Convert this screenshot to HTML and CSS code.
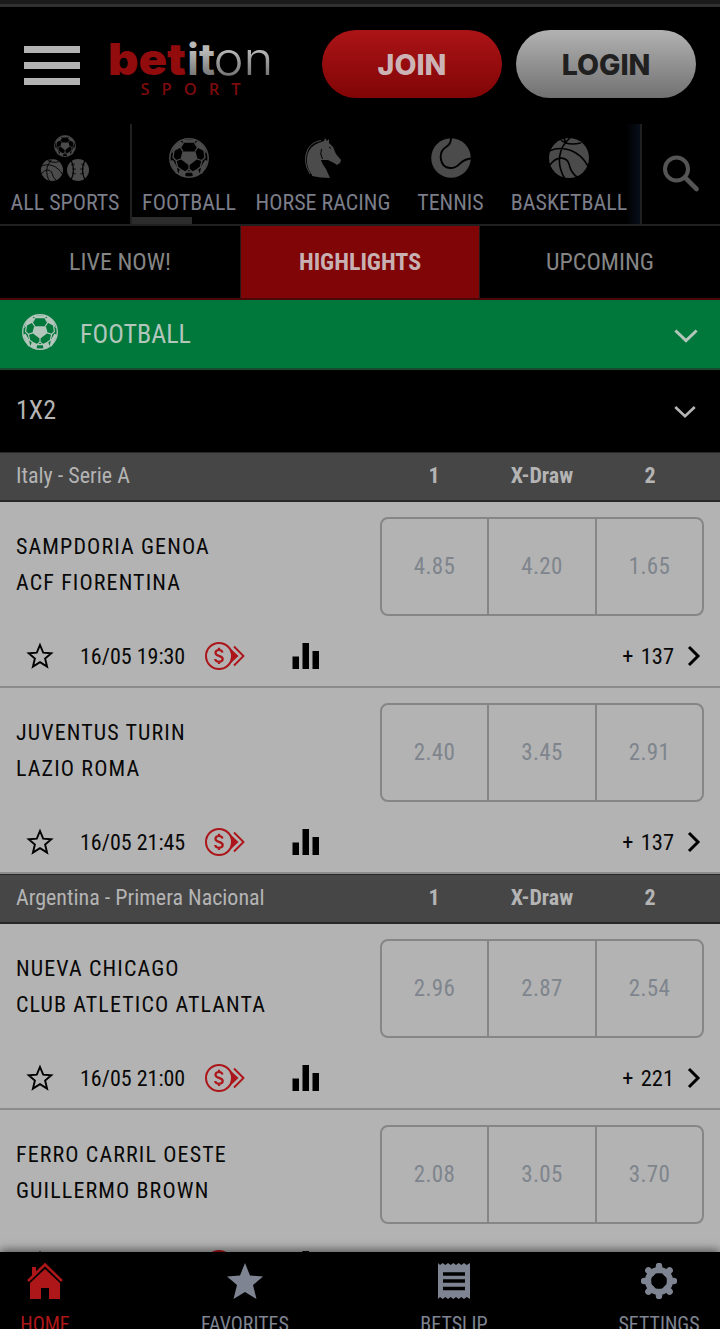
FILE: index.html
```html
<!DOCTYPE html>
<html lang="en">
<head>
<meta charset="utf-8">
<title>Betiton Sport</title>
<link rel="stylesheet" href="styles.css">
</head>
<body>
<svg class="defs" aria-hidden="true">
  <defs>
    <linearGradient id="silver" x1="0" y1="0" x2="0" y2="1"><stop offset=".35" stop-color="#b8b8b8"/><stop offset=".85" stop-color="#707070"/></linearGradient>
    <symbol id="ball" viewBox="0 0 40 40">
      <circle cx="20" cy="20" r="19.2" fill="none" stroke="currentColor" stroke-width="1.5"/>
      <g fill="currentColor">
        <path d="M13.5 13.5h13l2 7.5-8.500 6.500-8.500-6.500z"/>
        <path d="M13 1.700h14l-1 3-12 0zM5 8l6-5 3 2-3 5-6 3-3 3zM35 8l-6-5-3 2 3 5 6 3 3 3zM1 23l3-1 4 7 1 6-2 1zM39 23l-3-1-4 7-1 6 2 1zM11 31l6 3-1 5-7-3zM29 31l-6 3 1 5 7-3z"/>
      </g>
      <g fill="none" stroke="currentColor" stroke-width="1.300">
        <path d="M14 13.500l-2.500-4 3-4.500M26 13.500l2.500-4-3-4.500M12 21l-5 1.500-3-3 1-7M28 21l5 1.500 3-3-1-7M20 27v4l-3.500 3h7l-3.500-3M7 22.500l1.500 6.500 4 3 4 2M33 22.500l-1.500 6.500-4 3-4 2"/>
      </g>
    </symbol>
    <symbol id="basket" viewBox="0 0 40 40">
      <circle cx="20" cy="20" r="20" fill="currentColor"/>
      <path d="M21 0C9 10 7 26 16 41M0 13C14 7 30 12 39 28M1 27C8 17 18 19 20 26q2 9 8 13M12 2q6 6 20 3M15 0q1 4 3 5" fill="none" stroke="#000" stroke-width="1.600"/>
    </symbol>
    <symbol id="star" viewBox="0 0 28 28"><path d="M14 3l3.200 7.600 8.100.600-6.200 5.300 2 8.100-7.100-4.400-7.100 4.400 2-8.100L2.700 11.200l8.100-.600z" fill="none" stroke="#000" stroke-width="1.900"/></symbol>
    <symbol id="cash" viewBox="0 0 42 30">
      <circle cx="15" cy="15" r="13" fill="none" stroke="#ac1519" stroke-width="2"/>
      <path d="M26 7l8.500 8-8.500 8q3-8 0-16z" fill="#ac1519"/>
      <path d="M30 5.500l9.500 9.500-9.500 9.500" fill="none" stroke="#ac1519" stroke-width="1.900"/>
      <path d="M18.500 11.500q-.500-2.500-3.500-2.500-3.500 0-3.500 2.800 0 2.200 3.500 3.100 3.700 1 3.700 3.200 0 2.700-3.700 2.700-3.500 0-3.800-2.800M15 6.800v2.500m0 11v2.700" fill="none" stroke="#ac1519" stroke-width="2.200"/>
    </symbol>
    <symbol id="bars" viewBox="0 0 28 28"><path d="M.500 14.500H7V27H.500zM10.500 1H17v26h-6.500zM20.500 9H27v18h-6.500z"/></symbol>
    <symbol id="right" viewBox="0 0 14 22"><path d="M2 2l9 9-9 9" fill="none" stroke="#000" stroke-width="3"/></symbol>
    <symbol id="down" viewBox="0 0 26 16"><path d="M1.500 2L13 13 24.500 2" fill="none" stroke="currentColor" stroke-width="3.200"/></symbol>
  </defs>
</svg>
<div class="app">
  <div class="status"></div>
  <header class="head">
    <div class="burger"><i></i><i></i><i></i></div>
    <svg class="logo" viewBox="0 0 170 66" width="170" height="66">
      <text class="bet" x="3" y="41" textLength="78" lengthAdjust="spacingAndGlyphs">bet</text>
      <text class="it" x="82" y="41" textLength="28" lengthAdjust="spacingAndGlyphs">it</text>
      <text class="on" x="108.500" y="41" textLength="60" lengthAdjust="spacingAndGlyphs">on</text>
      <text class="sport" x="35.500" y="61" textLength="100">SPORT</text>
    </svg>
    <div class="btn join">JOIN</div>
    <div class="btn login">LOGIN</div>
  </header>
  <nav class="sports">
    <div class="sport-item all">
      <div class="trio"><svg class="s22"><use href="#ball"/></svg><div><svg class="s22"><use href="#basket"/></svg><svg class="s22" viewBox="0 0 22 22"><circle cx="11" cy="11" r="11" fill="currentColor"/><path d="M4 1q5 10 0 20M18 1q-5 10 0 20" fill="none" stroke="#000" stroke-width="1.200"/><path d="M4 6l4-1M5 10h4M5 14l4 1M18 6l-4-1M17 10h-4M17 14l-4 1" stroke="#000" stroke-width=".700"/></svg></div></div>
      <span>ALL SPORTS</span>
    </div>
    <div class="sport-item foot"><svg class="s40"><use href="#ball"/></svg><span>FOOTBALL</span><b class="under"></b></div>
    <div class="sport-item horse"><svg class="s40" viewBox="0 0 40 40"><path d="M9 37Q3 29 4 20 5 8 18 4l3-1 1-3 2 3 2-2v4l4 4 3 7 5 6-1 3-3 2-3-2-6-3-7 0q1 4 5 9l4 9q-10 0-18-2z" fill="currentColor"/><path d="M7 36Q-1 23 5 11 9 4 18 2.500" fill="none" stroke="currentColor" stroke-width="1"/><path d="M18.500 11q-2 5 1 10" fill="none" stroke="#000"/><path d="M26 9l2 1.500" stroke="#000"/></svg><span>HORSE RACING</span></div>
    <div class="sport-item tennis"><svg class="s40" viewBox="0 0 40 40"><circle cx="20" cy="20" r="19.800" fill="currentColor"/><path d="M20 0q0 6-5 9C7 14 8 29 19 30 29 31 28 21 40 20.500" fill="none" stroke="#000" stroke-width="1.900"/></svg><span>TENNIS</span></div>
    <div class="sport-item hoops"><svg class="s40"><use href="#basket"/></svg><span>BASKETBALL</span></div>
    <div class="search"><svg width="38" height="38" viewBox="0 0 38 38"><circle cx="14.500" cy="14" r="11.500" fill="none" stroke="currentColor" stroke-width="4"/><path d="M23 22.500L34.500 34" stroke="currentColor" stroke-width="4.600" stroke-linecap="round"/></svg></div>
  </nav>
  <nav class="tabs"><div class="tab"><span>LIVE NOW!</span></div><div class="tab on-tab"><span>HIGHLIGHTS</span></div><div class="tab"><span>UPCOMING</span></div></nav>
  <div class="group"><svg class="s36"><use href="#ball"/></svg><span>FOOTBALL</span><svg class="chev"><use href="#down"/></svg></div>
  <div class="market"><span>1X2</span><svg class="chev small"><use href="#down"/></svg></div>

  <div class="league"><span>Italy - Serie A</span><b>1</b><b>X-Draw</b><b>2</b></div>
  <article class="match">
    <div class="top"><div class="teams"><span>SAMPDORIA GENOA</span><span>ACF FIORENTINA</span></div><div class="odds"><span>4.85</span><span>4.20</span><span>1.65</span></div></div>
    <div class="meta"><svg class="star"><use href="#star"/></svg><span class="date">16/05 19:30</span><svg class="cash"><use href="#cash"/></svg><svg class="bars"><use href="#bars"/></svg><span class="more">+ 137</span><svg class="right"><use href="#right"/></svg></div>
  </article>
  <article class="match">
    <div class="top"><div class="teams"><span>JUVENTUS TURIN</span><span>LAZIO ROMA</span></div><div class="odds"><span>2.40</span><span>3.45</span><span>2.91</span></div></div>
    <div class="meta"><svg class="star"><use href="#star"/></svg><span class="date">16/05 21:45</span><svg class="cash"><use href="#cash"/></svg><svg class="bars"><use href="#bars"/></svg><span class="more">+ 137</span><svg class="right"><use href="#right"/></svg></div>
  </article>
  <div class="league"><span>Argentina - Primera Nacional</span><b>1</b><b>X-Draw</b><b>2</b></div>
  <article class="match">
    <div class="top"><div class="teams"><span>NUEVA CHICAGO</span><span>CLUB ATLETICO ATLANTA</span></div><div class="odds"><span>2.96</span><span>2.87</span><span>2.54</span></div></div>
    <div class="meta"><svg class="star"><use href="#star"/></svg><span class="date">16/05 21:00</span><svg class="cash"><use href="#cash"/></svg><svg class="bars"><use href="#bars"/></svg><span class="more">+ 221</span><svg class="right"><use href="#right"/></svg></div>
  </article>
  <article class="match">
    <div class="top"><div class="teams"><span>FERRO CARRIL OESTE</span><span>GUILLERMO BROWN</span></div><div class="odds"><span>2.08</span><span>3.05</span><span>3.70</span></div></div>
    <div class="meta last"><svg class="star"><use href="#star"/></svg><span class="date"></span><svg class="cash"><use href="#cash"/></svg><svg class="bars"><use href="#bars"/></svg></div>
  </article>

  <nav class="bottom">
    <div class="dock home"><svg class="s36" viewBox="0 0 36 36"><path d="M1 18L18 1.500 35 18" fill="none" stroke="currentColor" stroke-width="2.600"/><path d="M5 4h4v5l-4 4zM3 20L18 6l15 14v16H22V25h-8v11H3z" fill="currentColor"/></svg><span>HOME</span></div>
    <div class="dock fav"><svg class="s36" viewBox="0 0 36 36"><path d="M18 0l5 12.500 13 1-10 8.500 3.500 14L18 29 6.500 36 10 22 0 13.500l13-1z" fill="currentColor"/></svg><span>FAVORITES</span></div>
    <div class="dock slip"><svg class="s36" viewBox="0 0 36 36"><path d="M2 0l2 2 2.700-2 2.600 2L12 0l2.700 2 2.600-2L20 2l2.700-2 2.600 2L28 0l2.700 2L34 0v36l-3.300-2-2.700 2-2.700-2-2.600 2-2.700-2-2.700 2-2.600-2-2.700 2-2.700-2-2.600 2L4 34l-2 2z" fill="currentColor"/><path d="M7 11h22M7 18h22M7 25.500h22" stroke="#000" stroke-width="3.400"/></svg><span>BETSLIP</span></div>
    <div class="dock set"><svg class="s36" viewBox="0 0 36 36"><circle cx="18" cy="18" r="11" fill="none" stroke="currentColor" stroke-width="6"/><path d="M18 3v4M18 29v4M3 18h4M29 18h4M7.400 7.400l3 3M25.600 25.600l3 3M7.400 28.600l3-3M25.600 10.400l3-3" stroke="currentColor" stroke-width="6.500" stroke-linecap="round"/></svg><span>SETTINGS</span></div>
  </nav>
</div>
</body>
</html>
```
FILE: styles.css
```css
* { box-sizing: border-box; }
body { margin: 0; background: #000; font-family: "Roboto Condensed", Roboto, sans-serif; font-stretch: 75%; }
svg { display: block; flex: none; }
span, b { white-space: nowrap; }
.defs { position: absolute; width: 0; height: 0; }
.app { width: 720px; height: 1329px; overflow: hidden; position: relative; background: #000; }
.status { height: 7px; background: #1a1a1a; border-bottom: 3px solid #303030; }
.head { height: 117px; display: flex; align-items: flex-start; padding: 23px 24px 0; }
.burger { width: 56px; margin-top: 16px; display: grid; gap: 9.500px; }
.burger i { height: 6.500px; background: #b3b3b3; }
.logo { margin-left: 25px; margin-top: 4px; overflow: visible; }
.logo text { font-family: Inter, sans-serif; font-stretch: normal; }
.bet { font-size: 44px; font-weight: 900; fill: #920b0d; }
.it { font-size: 44px; font-weight: 700; fill: url(#silver); }
.on { font-size: 46px; font-weight: 300; fill: url(#silver); }
.logo .sport { font-family: "Open Sans", sans-serif; font-size: 16.500px; font-weight: 600; fill: #7c0b0d; }
.btn { width: 180px; height: 68px; border-radius: 34px; display: flex; align-items: center; justify-content: center; font: 800 28.500px Inter, sans-serif; }
.join { margin-left: 47px; color: #ccb4b6; background: linear-gradient(#ab1417, #810506); }
.login { margin-left: 14px; color: #202020; background: linear-gradient(#b2b2b2, #717171); }
.sports { height: 102px; display: flex; border-bottom: 2px solid #202020; color: #4b4b4b; }
.sport-item { display: flex; flex-direction: column; align-items: center; font-size: 22px; padding-top: 14px; position: relative; }
.sport-item span { color: #7b7e89; margin-top: 10px; line-height: 30px; }
.all { width: 132px; border-right: 2px solid #202020; padding-top: 11px; }
.foot { width: 114px; }
.horse { width: 154px; }
.tennis { width: 101px; }
.hoops { flex: 1; padding-right: 3px; border-right: 2px solid #202020; background: linear-gradient(90deg, transparent 90%, #080e1a); }
.search { width: 78px; padding: 31px 0 0 20px; color: #555; }
.s22 { width: 22px; height: 22px; }
.s40 { width: 40px; height: 40px; }
.s36 { width: 36px; height: 36px; }
.trio { display: flex; flex-direction: column; align-items: center; height: 46px; gap: 2px; }
.trio div { display: flex; gap: 4px; }
.trio + span { margin-top: 7px; }
.under { position: absolute; left: 0; bottom: 0; width: 60px; height: 7px; background: #2c2c2c; }
.tabs { height: 74px; display: grid; grid-template-columns: repeat(3, 1fr); border-bottom: 2px solid #4c0808; font-size: 24px; color: #858585; }
.tab { display: flex; align-items: center; justify-content: center; padding-bottom: 1px; }
.on-tab { background: #800507; border: solid #27191a; border-width: 0 1px; color: #c8b1b3; font-weight: 700; }
.group { height: 70px; display: flex; align-items: center; padding: 1px 22px 2px; background: #00783b; border-bottom: 2px solid #194b31; color: #b2c6bb; font-size: 26px; }
.group .s36 { margin-top: -4px; }
.group span { margin-left: 22px; margin-top: 1px; }
.chev { width: 24px; height: 16px; margin-left: auto; margin-top: 5px; }
.market { height: 82px; display: flex; align-items: center; padding: 0 24px 3px 16px; color: #b4b4b4; font-size: 26px; }
.small { width: 22px; height: 14px; }
.league { height: 50px; border: solid #282828; border-width: 1px 0 2px; background: #464646; color: #b4b4b4; font-size: 22px; display: grid; grid-template-columns: 364px repeat(3, 108px); padding-left: 16px; line-height: 45px; }
.league b { text-align: center; }
.match { height: 186px; background: #b3b3b3; border-bottom: 2px solid #8b8b8b; color: #080808; }
.top { display: flex; justify-content: space-between; padding: 15px 16px 0; height: 114px; }
.teams { display: flex; flex-direction: column; font-size: 22px; line-height: 36px; letter-spacing: 1.120px; padding-top: 12px; }
.odds { width: 324px; height: 99px; border: 2px solid #868686; border-radius: 8px; display: grid; grid-template-columns: 105px 108px 107px; font-size: 23px; color: #7f858d; letter-spacing: .300px; }
.odds span { display: flex; align-items: center; justify-content: center; }
.odds span + span { border-left: 2px solid #868686; }
.meta { height: 56px; margin-top: 12px; display: flex; align-items: center; padding: 0 19px 0 26px; font-size: 22px; }
.star { width: 28px; height: 28px; }
.date { width: 124px; margin-left: 26px; }
.cash { width: 42px; height: 30px; }
.bars { width: 28px; height: 28px; margin-left: 46px; }
.more { margin-left: auto; font-size: 22.500px; word-spacing: 2px; }
.right { width: 14px; height: 22px; margin-left: 13px; }
.bottom { position: absolute; left: 0; top: 1252px; width: 720px; height: 77px; background: #000; box-shadow: 0 -2px 9px rgba(0,0,0,.55); color: #7e8491; }
.dock { position: absolute; top: 11px; width: 120px; display: flex; flex-direction: column; align-items: center; font-size: 20px; }
.dock span { margin-top: 11px; line-height: 28px; }
.home { left: -15px; color: #ad1719; }
.fav { left: 185px; }
.slip { left: 394px; }
.set { left: 599px; }
```
